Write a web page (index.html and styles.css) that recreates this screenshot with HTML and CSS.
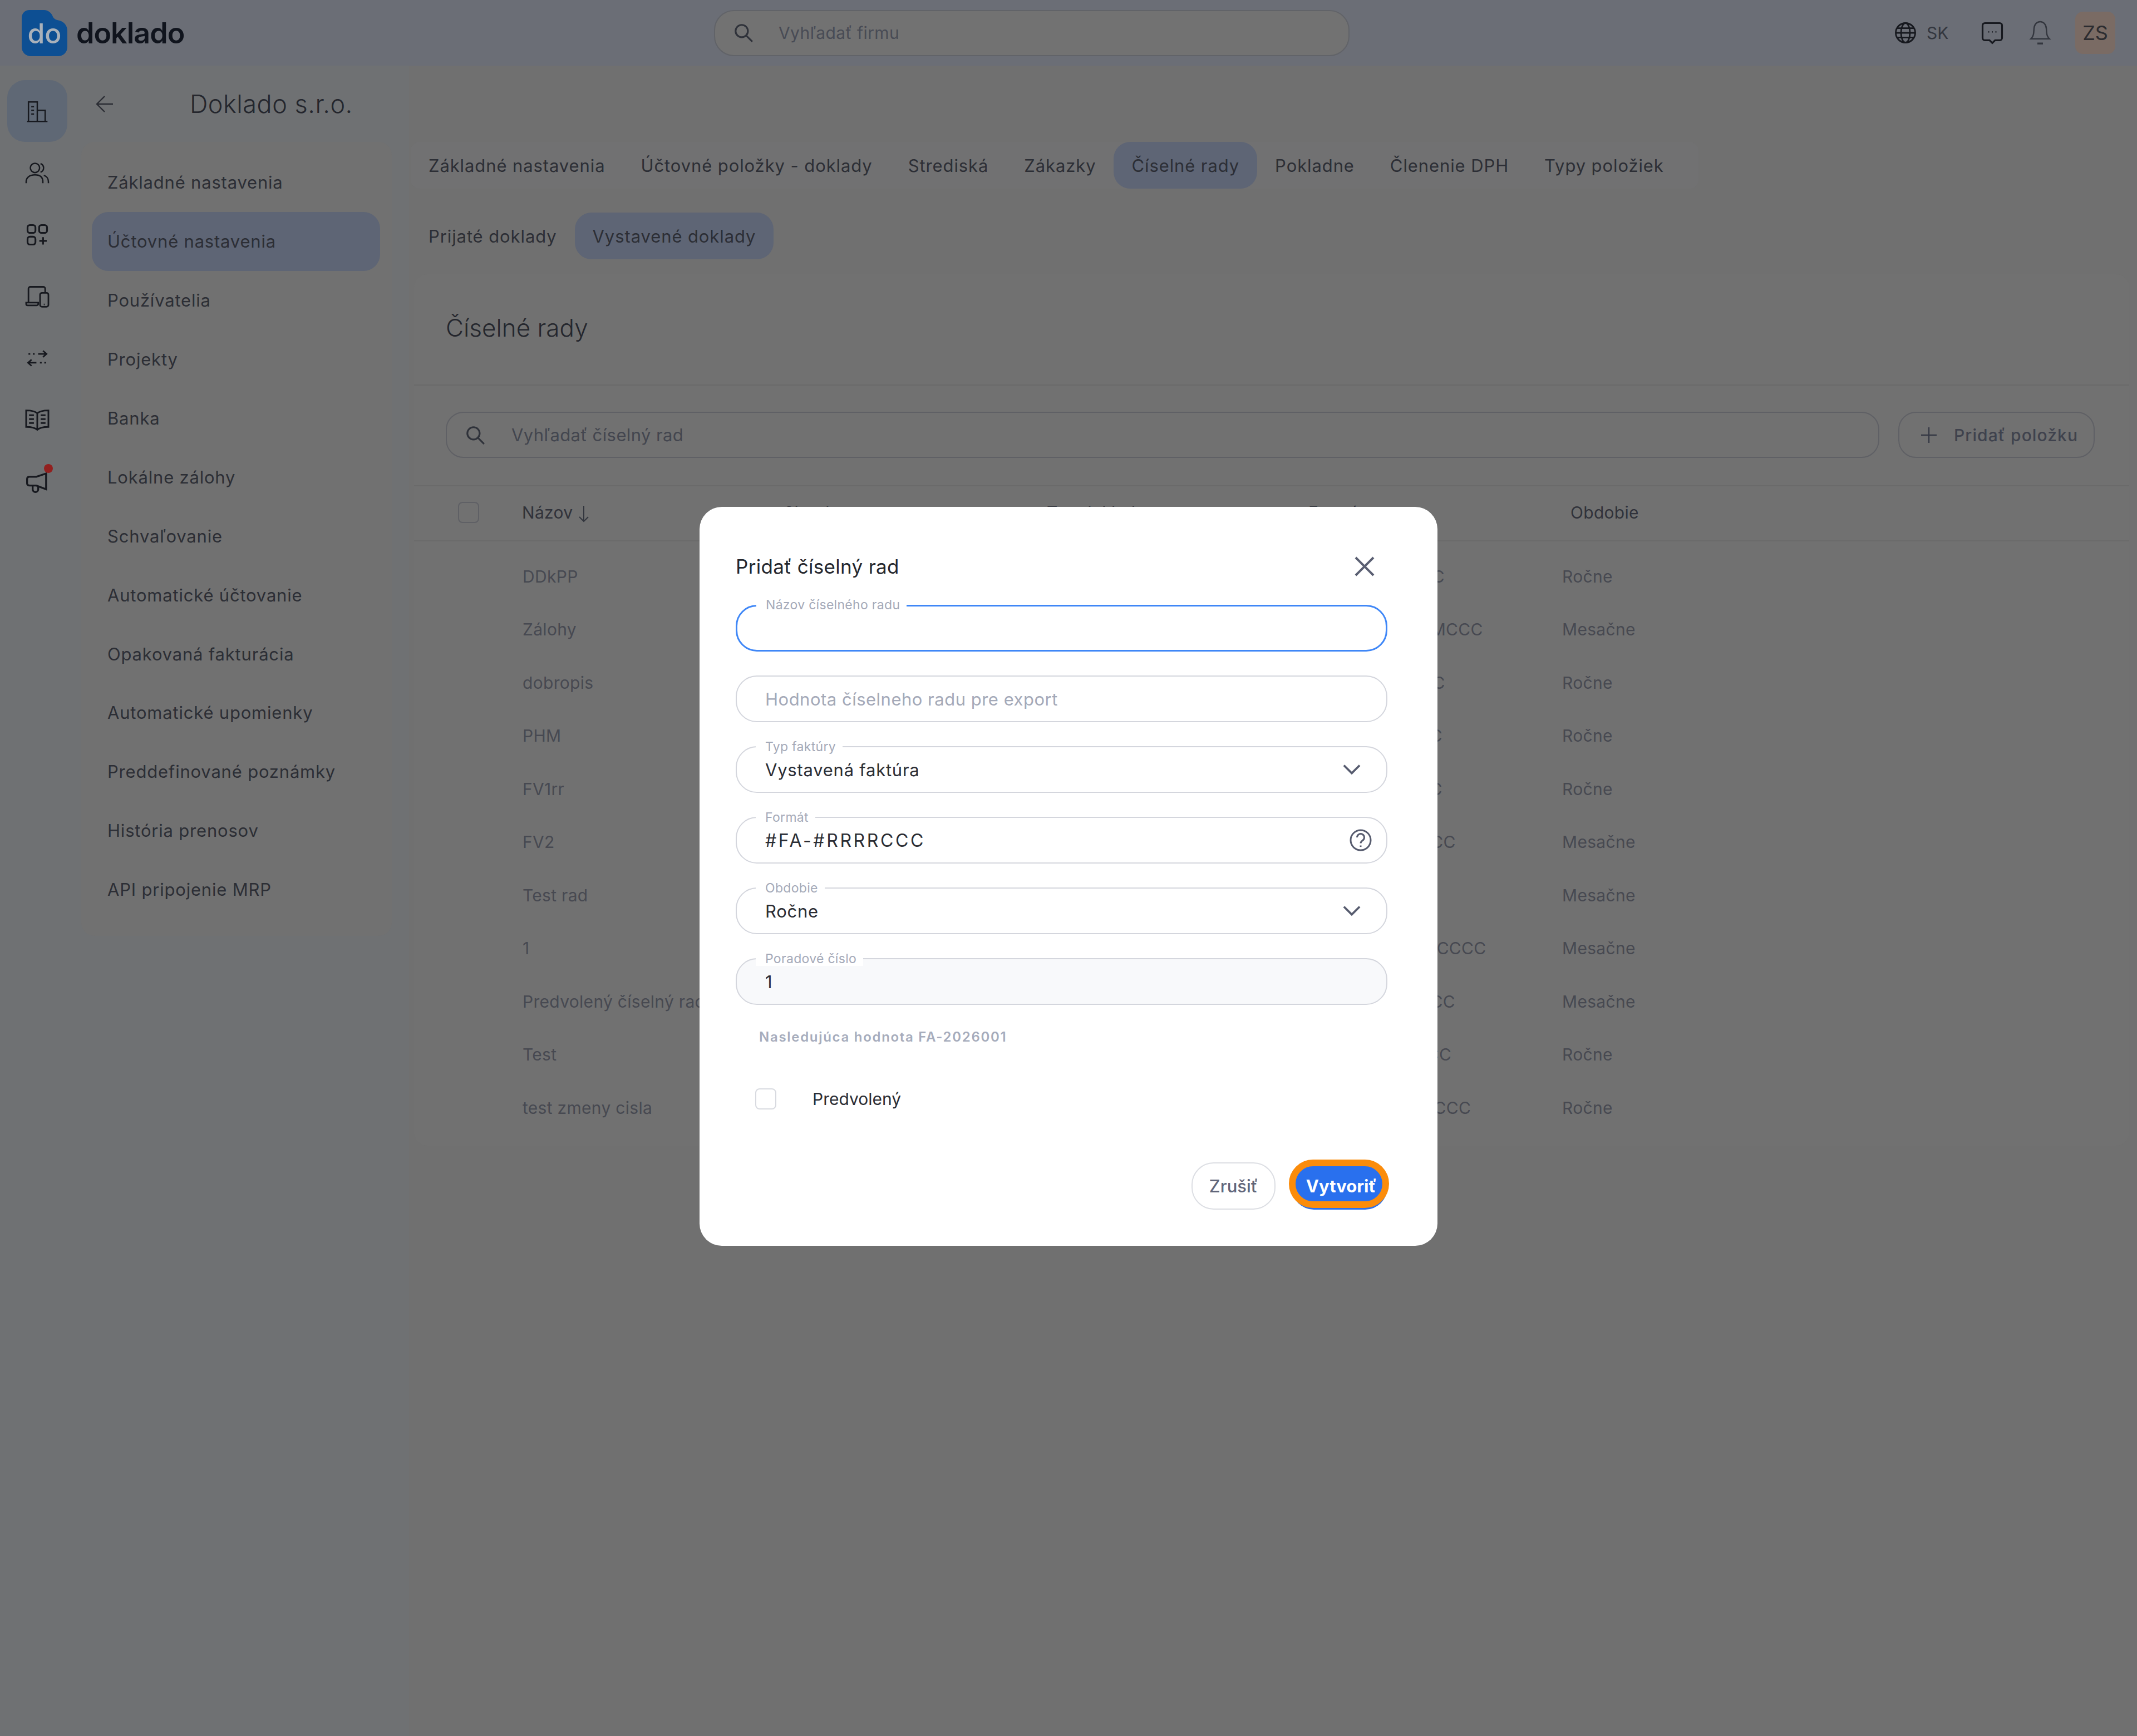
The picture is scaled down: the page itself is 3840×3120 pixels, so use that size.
FILE: index.html
```html
<!DOCTYPE html>
<html lang="sk">
<head>
    <meta charset="UTF-8">
    <title>Doklado - Číselné rady</title>
    <link rel="stylesheet" href="styles.css">
</head>
<body>

<header class="topbar">
    <div class="brand">
        <svg class="brand-mark" viewBox="0 0 82 83">
            <path fill="#0d4f93" d="M14 0H40C48 0 54 6 56 12C58 16 62 18 68 19C76 21 82 28 82 37V66C82 76 75 83 65 83H17C7 83 0 76 0 66V14C0 6 6 0 14 0Z"/>
            <text x="41" y="60" text-anchor="middle" class="brand-do">do</text>
        </svg>
        <span class="brand-name">doklado</span>
    </div>
    <div class="top-search">
        <svg width="38" height="38" viewBox="0 0 24 24" fill="none" stroke="#2f323a" stroke-width="2"><circle cx="10" cy="10" r="7"/><path d="M15 15l7 7"/></svg>
        <span>Vyhľadať firmu</span>
    </div>
    <div class="top-actions">
        <svg class="globe" width="40" height="40" viewBox="0 0 24 24" fill="none" stroke="#17191f" stroke-width="1.7"><circle cx="12" cy="12" r="10.5"/><ellipse cx="12" cy="12" rx="4.8" ry="10.5"/><path d="M1.500 12h21M3 7h18M3 17h18"/></svg>
        <span class="lang">SK</span>
        <svg class="chat" width="40" height="42" viewBox="0 0 24 25" fill="none" stroke="#17191f" stroke-width="1.9"><path d="M4 2h16a2.500 2.500 0 0 1 2.500 2.500V18a2.500 2.500 0 0 1-2.500 2.500h-5L12 23.500 9 20.500H4A2.500 2.500 0 0 1 1.500 18V4.500A2.500 2.500 0 0 1 4 2z"/><path d="M7.500 11.500h1.200M11.400 11.500h1.200M15.300 11.500h1.200" stroke-width="1.400"/></svg>
        <svg class="bell" width="40" height="44" viewBox="0 0 24 26" fill="none" stroke="#33363e" stroke-width="1.500"><path d="M2 19.500c1.800-1.800 2.800-3.500 3-6.500l.4-5C5.800 3.800 8.500 1 12 1s6.200 2.800 6.600 7l.4 5c.2 3 1.200 4.700 3 6.500z"/><path d="M9 24.500h6" stroke-width="2"/></svg>
        <div class="avatar">ZS</div>
    </div>
</header>

<div class="workspace">
    <nav class="rail">
        <div class="rail-item rail-active">
            <svg width="40" height="40" viewBox="0 0 24 24" fill="none" stroke="#17191f" stroke-width="1.500"><path d="M1 23h22M2.500 23V2h9.500v21M12 11h8.500v12M5.500 7h3M5.500 11h3M5.500 15h3"/></svg>
        </div>
        <div class="rail-item">
            <svg width="44" height="40" viewBox="0 0 26 24" fill="none" stroke="#17191f" stroke-width="1.500"><circle cx="10.500" cy="6.500" r="5"/><path d="M16.500 1.800a5 5 0 0 1 0 9.400M1 23v-1.500C1 17 4.500 14 10.500 14s8.500 3 8.500 7.500V23M20 14.500c3 .8 5 3.500 5 7V23"/></svg>
        </div>
        <div class="rail-item">
            <svg width="40" height="40" viewBox="0 0 24 24" fill="none" stroke="#17191f" stroke-width="1.900"><rect x="1.500" y="1.500" width="8.500" height="8.500" rx="2.500"/><rect x="14" y="1.500" width="8.500" height="8.500" rx="2.500"/><rect x="1.500" y="14" width="8.500" height="8.500" rx="2.500"/><path d="M18.200 14.500v8M14.200 18.500h8"/></svg>
        </div>
        <div class="rail-item">
            <svg width="44" height="40" viewBox="0 0 26 24" fill="none" stroke="#17191f" stroke-width="1.700"><path d="M3.500 18V3.500A2 2 0 0 1 5.500 1.500h14a2 2 0 0 1 2 2V8"/><path d="M1 18.500h13v1.500a1.500 1.500 0 0 1-1.500 1.500H2.500A1.500 1.500 0 0 1 1 20z"/><rect x="16" y="8" width="9" height="15" rx="2"/><path d="M20 20.500h1"/></svg>
        </div>
        <div class="rail-item">
            <svg width="38" height="32" viewBox="0 0 24 20" fill="none" stroke="#17191f" stroke-width="1.700"><path d="M13 5h9M18.500 1.500L22.500 5l-4 3.500"/><path d="M2 5h2M7 5h2M11 15H2M5.500 11.500L1.500 15l4 3.500M15 15h2M20 15h2"/></svg>
        </div>
        <div class="rail-item">
            <svg width="46" height="40" viewBox="0 0 26 23" fill="none" stroke="#17191f" stroke-width="1.700"><path d="M13 4.500C11 2.500 7 1.500 1.500 1.500v17c5.500 0 9.500 1 11.500 3 2-2 6-3 11.500-3v-17c-5.500 0-9.500 1-11.500 3zM13 4.500v17"/><path d="M4.500 6.500h5M4.500 10.500h5M4.500 14.500h5M16.500 6.500h5M16.500 10.500h5M16.500 14.500h5"/></svg>
        </div>
        <div class="rail-item">
            <div class="megaphone">
                <svg width="44" height="40" viewBox="0 0 26 24" fill="none" stroke="#17191f" stroke-width="2"><path d="M2 9c0-1.500 1-2.500 2.500-2.500H12L22.500 3v17L12 16H5C3 16 2 15 2 13.500z"/><path d="M8 16v4a3 3 0 0 0 6 0v-3.500"/></svg>
                <span class="red-dot"></span>
            </div>
        </div>
    </nav>

    <aside class="settings-col">
        <div class="company-head">
            <svg width="32" height="32" viewBox="0 0 32 32" fill="none" stroke="#2a2c33" stroke-width="2.400"><path d="M31 16H2M16 2L2 16l14 14"/></svg>
            <h1>Doklado s.r.o.</h1>
        </div>
        <ul class="settings-menu">
            <li>Základné nastavenia</li>
            <li class="active">Účtovné nastavenia</li>
            <li>Používatelia</li>
            <li>Projekty</li>
            <li>Banka</li>
            <li>Lokálne zálohy</li>
            <li>Schvaľovanie</li>
            <li>Automatické účtovanie</li>
            <li>Opakovaná fakturácia</li>
            <li>Automatické upomienky</li>
            <li>Preddefinované poznámky</li>
            <li>História prenosov</li>
            <li>API pripojenie MRP</li>
        </ul>
    </aside>

    <main class="content">
        <div class="tabs">
            <span class="tab">Základné nastavenia</span>
            <span class="tab">Účtovné položky - doklady</span>
            <span class="tab">Strediská</span>
            <span class="tab">Zákazky</span>
            <span class="tab active">Číselné rady</span>
            <span class="tab">Pokladne</span>
            <span class="tab">Členenie DPH</span>
            <span class="tab">Typy položiek</span>
        </div>
        <div class="tabs subtabs">
            <span class="tab">Prijaté doklady</span>
            <span class="tab active">Vystavené doklady</span>
        </div>

        <section class="card">
            <h2 class="card-title">Číselné rady</h2>
            <div class="toolbar">
                <div class="table-search">
                    <svg width="38" height="38" viewBox="0 0 24 24" fill="none" stroke="#2f323a" stroke-width="2"><circle cx="10" cy="10" r="7"/><path d="M15 15l7 7"/></svg>
                    <span>Vyhľadať číselný rad</span>
                </div>
                <div class="add-btn">
                    <svg width="30" height="30" viewBox="0 0 30 30" stroke="#363945" stroke-width="2.400"><path d="M15 1v28M1 15h28"/></svg>
                    <span>Pridať položku</span>
                </div>
            </div>
            <div class="table">
                <div class="row head">
                    <span class="check"></span>
                    <span>Názov <svg class="sort" width="22" height="32" viewBox="0 0 22 32" fill="none" stroke="#33363e" stroke-width="2"><path d="M11 2v28M3 22l8 8 8-8"/></svg></span>
                    <span>Skratka</span><span>Typ dokladu</span><span>Formát</span><span>Obdobie</span>
                </div>
                <div class="row"><span></span><span>DDkPP</span><span>DD</span><span>Prijatá</span><span>#DDKP-#RRRRCC</span><span>Ročne</span></div>
                <div class="row"><span></span><span>Zálohy</span><span>ZA</span><span>Prijatá</span><span>#ZALII-#RRRRMMCCC</span><span>Mesačne</span></div>
                <div class="row"><span></span><span>dobropis</span><span>DB</span><span>Prijatá</span><span>#DOBP-#RRRRCC</span><span>Ročne</span></div>
                <div class="row"><span></span><span>PHM</span><span>PH</span><span>Prijatá</span><span>#FAPH-#RRRRCC</span><span>Ročne</span></div>
                <div class="row"><span></span><span>FV1rr</span><span>FV</span><span>Prijatá</span><span>#FVRR-#RRRRCC</span><span>Ročne</span></div>
                <div class="row"><span></span><span>FV2</span><span>F2</span><span>Prijatá</span><span>#FVI-#RRRRMMCC</span><span>Mesačne</span></div>
                <div class="row"><span></span><span>Test rad</span><span>TR</span><span>Prijatá</span><span>#TR-#RRRR</span><span>Mesačne</span></div>
                <div class="row"><span></span><span>1</span><span>1</span><span>Prijatá</span><span>#JED-#RRRRMMCCCC</span><span>Mesačne</span></div>
                <div class="row"><span></span><span>Predvolený číselný rad</span><span>PD</span><span>Prijatá</span><span>#PREII-#RRRRMCC</span><span>Mesačne</span></div>
                <div class="row"><span></span><span>Test</span><span>TE</span><span>Prijatá</span><span>#TESTT-#RRRRCC</span><span>Ročne</span></div>
                <div class="row"><span></span><span>test zmeny cisla</span><span>TZ</span><span>Prijatá</span><span>#TZMEN-#RRRRCCC</span><span>Ročne</span></div>
            </div>
        </section>
    </main>
</div>

<div class="modal-layer">
    <div class="modal">
        <div class="modal-head">
            <h3>Pridať číselný rad</h3>
            <svg width="38" height="38" viewBox="0 0 38 38" stroke="#5b6073" stroke-width="4"><path d="M3 3l32 32M35 3L3 35"/></svg>
        </div>

        <div class="field focus"><label>Názov číselného radu</label></div>
        <div class="field gap-wide"><span class="placeholder">Hodnota číselneho radu pre export</span></div>
        <div class="field gap-wide">
            <label>Typ faktúry</label>
            <span>Vystavená faktúra</span>
            <svg class="chev" width="32" height="20" viewBox="0 0 34 20" fill="none" stroke="#565b6e" stroke-width="4"><path d="M2 2l15 15L32 2"/></svg>
        </div>
        <div class="field">
            <label>Formát</label>
            <span class="format-value">#FA-#RRRRCCC</span>
            <svg width="40" height="40" viewBox="0 0 40 40" fill="none" stroke="#565b6e" stroke-width="3"><circle cx="20" cy="20" r="18"/><path d="M13.500 15a6.500 6.500 0 1 1 10 5.500c-2.500 1.600-3.500 2.700-3.500 5"/><path d="M20 29.500v2.500"/></svg>
        </div>
        <div class="field">
            <label>Obdobie</label>
            <span>Ročne</span>
            <svg class="chev" width="32" height="20" viewBox="0 0 34 20" fill="none" stroke="#565b6e" stroke-width="4"><path d="M2 2l15 15L32 2"/></svg>
        </div>
        <div class="field readonly"><label>Poradové číslo</label><span>1</span></div>

        <p class="next-value">Nasledujúca hodnota FA-2026001</p>

        <div class="default-row">
            <span class="check light"></span>
            <span>Predvolený</span>
        </div>

        <div class="modal-actions">
            <button class="btn-cancel">Zrušiť</button>
            <button class="btn-create">Vytvoriť</button>
        </div>
    </div>
</div>

</body>
</html>
```

FILE: styles.css
```css
* {
    box-sizing: border-box;
}
body {
    margin: 0;
    height: 3120px;
    overflow: hidden;
    position: relative;
    background: #707070;
    font-family: Inter, "Noto Sans", sans-serif;
    font-size: 30px;
    color: #2c2e35;
}
h1, h2, h3, p, ul {
    margin: 0;
    padding: 0;
    font-weight: 400;
}

/* top bar */
.topbar {
    height: 118px;
    background: #6b6e76;
    display: flex;
    align-items: center;
    padding-left: 39px;
}
.brand {
    display: flex;
    align-items: center;
    gap: 16px;
    width: 1244px;
}
.brand-mark {
    width: 82px;
    height: 83px;
}
.brand-do {
    font-size: 50px;
    font-weight: 500;
    fill: #a9b1ba;
    font-family: Inter, sans-serif;
}
.brand-name {
    font-size: 52px;
    font-weight: 600;
    color: #10141d;
    letter-spacing: -1px;
}
.top-search {
    width: 1142px;
    height: 83px;
    border: 2px solid #616368;
    border-radius: 36px;
    background: #727272;
    display: flex;
    align-items: center;
    padding-left: 32px;
    gap: 44px;
    color: #484b55;
    letter-spacing: 0.4px;
}
.top-actions {
    flex: 1;
    display: flex;
    align-items: center;
    padding-left: 979px;
}
.globe {
    margin-right: 18px;
}
.lang {
    color: #33363e;
    margin-right: 59px;
    width: 39px;
}
.chat {
    margin-right: 46px;
}
.avatar {
    margin-left: 43px;
    width: 72px;
    height: 76px;
    background: #7a6b64;
    border-radius: 14px;
    display: flex;
    align-items: center;
    justify-content: center;
    font-size: 36px;
    color: #2c2c30;
}

/* left icon rail */
.workspace {
    display: flex;
    height: 3002px;
}
.rail {
    width: 146px;
    padding: 26px 0 0 13px;
    display: flex;
    flex-direction: column;
    background: #6f7173;
}
.rail-item {
    width: 108px;
    height: 111px;
    display: flex;
    align-items: center;
    justify-content: center;
}
.rail-active {
    background: #5f6875;
    border-radius: 32px;
}
.megaphone {
    position: relative;
    display: flex;
}
.red-dot {
    position: absolute;
    right: -6px;
    top: -12px;
    width: 16px;
    height: 16px;
    border-radius: 50%;
    background: #92201f;
}

/* settings column */
.settings-col {
    width: 589px;
    background: #6f7173;
}
.company-head {
    height: 137px;
    display: flex;
    align-items: center;
    padding: 0 0 0 26px;
    gap: 137px;
}
.company-head h1 {
    font-size: 45px;
    font-weight: 300;
    letter-spacing: 0.5px;
    color: #24262d;
}
.settings-menu {
    list-style: none;
    width: 558px;
    background: #717171;
    border-radius: 24px;
    padding: 20px 21px 30px 19px;
}
.settings-menu li {
    height: 105.900px;
    display: flex;
    align-items: center;
    padding-left: 28px;
    font-size: 31px;
    letter-spacing: 0.8px;
    border-radius: 30px;
}
.settings-menu li.active {
    background: #5e6575;
}

/* main area */
.content {
    flex: 1;
    padding: 0 14px 0 3px;
}
.tabs {
    display: inline-flex;
    height: 84px;
    margin-top: 137px;
    background: #717172;
    border-radius: 16px;
    padding: 0 30px 0 0;
    vertical-align: top;
}
.tab {
    display: flex;
    align-items: center;
    padding: 0 32px;
    border-radius: 30px;
    font-size: 31px;
    letter-spacing: 0.9px;
    white-space: nowrap;
}
.tab.active {
    background: #5e6575;
}
.subtabs {
    display: flex;
    margin-top: 43px;
    background: none;
    padding: 0;
}
.card {
    margin: 27px 0 0 6px;
    background: #717171;
    border-radius: 24px;
    padding-bottom: 20px;
    width: 3082px;
}
.card-title {
    height: 200px;
    padding: 0 0 7px 57px;
    display: flex;
    align-items: center;
    font-size: 44px;
    font-weight: 300;
    color: #24262d;
    border-bottom: 2px solid #6a6a6a;
}
.toolbar {
    display: flex;
    gap: 34px;
    padding: 47px 62px 49px 57px;
    border-bottom: 2px solid #6a6a6a;
}
.table-search, .add-btn {
    height: 83px;
    border: 2px solid #5f6065;
    border-radius: 32px;
    display: flex;
    align-items: center;
    color: #43464f;
    font-size: 31px;
    letter-spacing: 0.4px;
}
.table-search {
    flex: 1;
    padding-left: 32px;
    gap: 46px;
}
.add-btn {
    width: 353px;
    padding-left: 38px;
    gap: 30px;
    color: #3f424d;
    font-size: 30px;
    font-weight: 500;
    letter-spacing: 1.100px;
}
.row {
    display: grid;
    grid-template-columns: 195px 468px 473px 458px 469px 1fr;
    height: 95.500px;
    align-items: center;
    color: #474951;
    letter-spacing: 0.3px;
    white-space: nowrap;
}
.row.head {
    height: 99px;
    margin-bottom: 15px;
    padding-bottom: 3px;
    border-bottom: 2px solid #6a6a6a;
    color: #30323a;
    grid-template-columns: 194px 470px 473px 470px 471px 1fr;
}
.check {
    display: block;
    width: 38px;
    height: 38px;
    margin-left: 79px;
    border: 2px solid #5f6065;
    border-radius: 8px;
}
.sort {
    vertical-align: middle;
}

/* modal */
.modal-layer {
    position: absolute;
    inset: 0;
    display: flex;
    justify-content: center;
    align-items: flex-start;
    padding-top: 911px;
}
.modal {
    width: 1326px;
    height: 1328px;
    background: #fff;
    border-radius: 40px;
    padding: 0 90px 0 65px;
}
.modal-head {
    height: 176px;
    padding: 38px 22px 0 0;
    display: flex;
    align-items: center;
    justify-content: space-between;
}
.modal-head h3 {
    font-size: 35px;
    letter-spacing: 0.3px;
    color: #24262d;
}
.field {
    position: relative;
    height: 84px;
    margin-bottom: 43px;
    border: 2.500px solid #d4d6dd;
    border-radius: 38px;
    display: flex;
    align-items: center;
    justify-content: space-between;
    padding: 0 26px 0 51px;
    color: #2b2d34;
    font-size: 31px;
    letter-spacing: 0.75px;
}
.field.focus {
    border: 3px solid #3f87f7;
}
.field.readonly {
    background: #f8f9fb;
}
.field label {
    position: absolute;
    top: -14px;
    left: 34px;
    background: #fff;
    padding: 0 12px 0 17px;
    line-height: 26px;
    font-size: 23px;
    letter-spacing: 0.3px;
    color: #a4a9b8;
}
.field.focus label {
    top: -16px;
}
.placeholder {
    color: #a4a9b8;
    letter-spacing: 0.5px;
}
.chev {
    margin-right: 20px;
}
.format-value {
    font-size: 32px;
    letter-spacing: 3.600px;
}
.next-value {
    margin: 15px 0 0 42px;
    font-size: 24px;
    font-weight: 600;
    letter-spacing: 1.700px;
    color: #a6acbc;
}
.default-row {
    display: flex;
    align-items: center;
    gap: 65px;
    margin: 78px 0 0 35px;
    color: #2b2d34;
}
.check.light {
    margin: 0;
    border-color: #d8dae0;
}
.modal-actions {
    display: flex;
    justify-content: flex-end;
    gap: 29px;
    margin-top: 95px;
}
.modal-actions button {
    height: 85px;
    border-radius: 40px;
    font-family: inherit;
    font-size: 31px;
}
.btn-cancel {
    width: 151px;
    background: #fff;
    border: 2.500px solid #dcdee3;
    color: #61667a;
    font-weight: 500;
}
.btn-create {
    position: relative;
    width: 172px;
    padding-left: 12px;
    background: #2970ee;
    border: 0;
    color: #fff;
    font-weight: 700;
}
.btn-create::after {
    content: "";
    box-sizing: border-box;
    position: absolute;
    left: -5px;
    top: -5px;
    width: 180px;
    height: 87px;
    border: 12px solid #fb8c0b;
    border-radius: 44px;
}
```
